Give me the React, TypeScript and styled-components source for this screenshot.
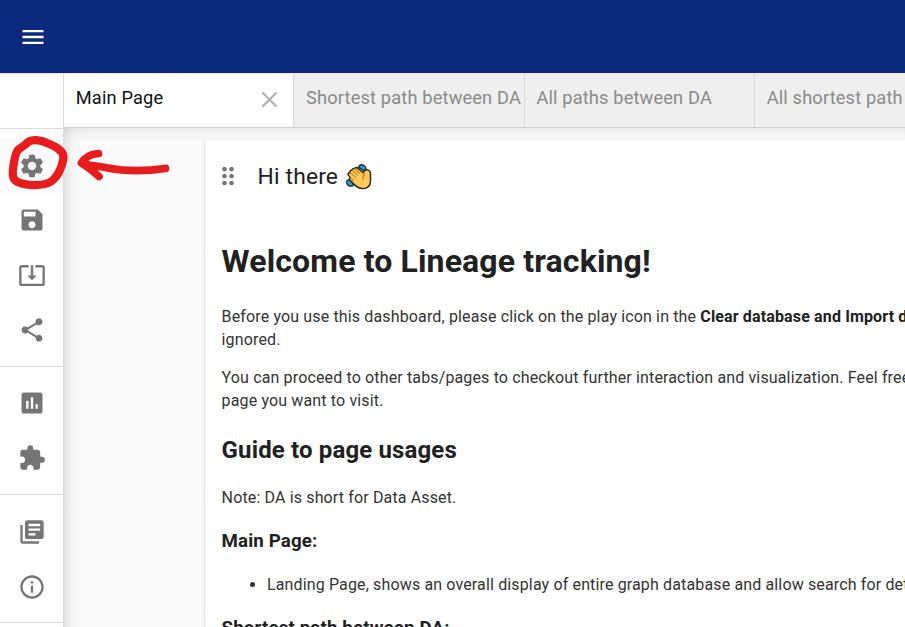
import React from "react";
import styled, { createGlobalStyle } from "styled-components";
import {
  MdClose,
  MdDragIndicator,
  MdExtension,
  MdInfoOutline,
  MdInsertChart,
  MdLibraryBooks,
  MdMenu,
  MdSave,
  MdSettings,
  MdShare,
  MdSystemUpdateAlt,
} from "react-icons/md";

const GlobalStyle = createGlobalStyle`
  * { box-sizing: border-box; }
  html, body { margin: 0; overflow: hidden; }
  body { font-family: Roboto, sans-serif; background: #fafafa; }
`;

const Page = styled.div`
  position: relative;
  display: grid;
  grid-template: 73px 554px / 64px 841px;
  width: 905px;
  height: 627px;
  overflow: hidden;
`;

const Header = styled.header`
  grid-column: 1 / -1;
  display: flex;
  align-items: center;
  padding: 0 0 0 19px;
  background: #0b297d;
  color: #fff;
  svg { width: 28px; height: 28px; }
`;

const Sidebar = styled.nav`
  border-right: 1px solid #dcdcdf;
  border-top: 1px solid #dfe3ee;
  background: #fff;
`;

const SidebarTop = styled.div`
  height: 54px;
`;

const IconGroup = styled.div`
  border-top: 1px solid #dadada;
  padding: 9.4px 0 8.6px;
`;

const IconRow = styled.button<{ $active?: boolean }>`
  display: flex;
  align-items: center;
  width: 100%;
  height: 54.7px;
  padding: 0 0 0 18px;
  border: 0;
  background: ${(p) => (p.$active ? "#fafafa" : "transparent")};
  color: #757575;
  svg { flex: none; width: 28px; height: 28px; }
`;

const Main = styled.main`
  display: flex;
  flex-direction: column;
  min-width: 0;
`;

const TabBar = styled.div`
  flex: none;
  display: flex;
  height: 55px;
  overflow: hidden;
  border-top: 1px solid #e9eef4;
  border-bottom: 1px solid #d0d0d0;
  background: #efefef;
`;

const Tab = styled.div<{ $active?: boolean }>`
  flex: none;
  display: flex;
  justify-content: space-between;
  width: 230.3px;
  padding: 12px 0 0 11.8px;
  overflow: hidden;
  border-right: 1px solid #d9d9d9;
  background: ${(p) => (p.$active ? "#fff" : "#efefef")};
  color: ${(p) => (p.$active ? "#111" : "#8a8a8a")};
  font-size: 18.24px;
  line-height: 24px;
  letter-spacing: 0.15px;
  white-space: nowrap;
  svg { width: 27px; height: 27px; margin: 0 10px 0 0; color: #b4b4b4; }
`;

const Canvas = styled.div`
  flex: 1;
  min-height: 0;
  padding: 12px 0 0 141px;
  background:
    linear-gradient(to bottom, rgba(0, 0, 0, 0.06), rgba(0, 0, 0, 0.015) 10px, transparent 14px),
    linear-gradient(to right, rgba(0, 0, 0, 0.09), rgba(0, 0, 0, 0.025) 8px, transparent 18px),
    #fafafa;
`;

const Card = styled.article`
  width: 700px;
  height: 600px;
  padding: 0 0 0 16.6px;
  border-radius: 4px 0 0 0;
  background: #fff;
  box-shadow: 0 1px 3px rgba(0, 0, 0, 0.24);
`;

const CardHeader = styled.div`
  display: flex;
  align-items: center;
  height: 72px;
  color: #212121;
  font-size: 22.8px;
  letter-spacing: 0.17px;
`;

const DragHandle = styled(MdDragIndicator)`
  width: 28px;
  height: 28px;
  margin: 0 16px 1px -8px;
  color: #757575;
`;

const Wave = styled.svg`
  width: 27px;
  height: 27px;
  margin-left: 6.5px;
`;

const Markdown = styled.div`
  color: #333;
  font-size: 16px;
  line-height: 23px;
  letter-spacing: 0.14px;
  white-space: nowrap;
  h1, h2, h3 { color: #212121; font-weight: 700; }
  h1 { margin: 26px 0 0; font-size: 32px; line-height: 46px; }
  h2 { margin: 21px 0 0; font-size: 24px; line-height: 35px; }
  h3 { margin: 19px 0 0; font-size: 18.7px; line-height: 27px; }
  p { margin: 15px 0 0; }
  h1 + p { margin-top: 21px; }
  h2 + p { margin-top: 18px; }
  ul { margin: 18px 0 0; padding-left: 45.4px; }
  strong { color: #212121; }
`;

const Annotation = styled.svg`
  position: absolute;
  left: 0;
  top: 130px;
  pointer-events: none;
`;

function WavingHand() {
  return (
    <Wave viewBox="0 0 28 28" fill="none" strokeLinecap="round" strokeLinejoin="round">
      <g fill="#3c9cc2" stroke="#19313b" strokeWidth="1.4">
        <path d="M14 4Q16 0.8 19.5 2.4Q22.5 4 21.8 8.4L18 7Z" />
        <path d="M5 17Q0.6 18 2 21.5Q3.5 25 8.5 23.6L8.5 20Z" />
      </g>
      <path
        d="M3.2 12Q3 9.6 5.4 10Q4.7 7.5 7.2 7.2Q7.8 5 10 5.9Q11.3 4 13.2 5.3L19.2 10.3Q20 6.4 23.4 7.1Q26.7 7.8 26.4 12V19Q26.2 26.5 18.5 26.6Q14 26.6 10.8 23.4L5.4 18.2Q3.7 16.4 5.4 15.2Z"
        fill="#ffca55"
        stroke="#24221c"
        strokeWidth="1.5"
      />
      <path
        d="M5.4 10L11 15M7.2 7.2L13 12.5M10 5.9L15.5 11M5.4 15.2L8.5 18M19.2 10.3L20.5 12Q18 13.5 18.5 17"
        stroke="#c27c25"
        strokeWidth="1.1"
      />
    </Wave>
  );
}

const groups = [
  [MdSettings, MdSave, MdSystemUpdateAlt, MdShare],
  [MdInsertChart, MdExtension],
  [MdLibraryBooks, MdInfoOutline],
];

const tabs = ["Main Page", "Shortest path between DA", "All paths between DA", "All shortest path"];

export default function App() {
  return (
    <>
      <GlobalStyle />
      <Page>
        <Header>
          <MdMenu />
        </Header>
        <Sidebar>
          <SidebarTop />
          {groups.map((icons, g) => (
            <IconGroup key={g}>
              {icons.map((Icon, i) => (
                <IconRow key={i} $active={g === 0 && i === 0}>
                  <Icon />
                </IconRow>
              ))}
            </IconGroup>
          ))}
          <IconGroup />
        </Sidebar>
        <Main>
          <TabBar>
            {tabs.map((label, i) => (
              <Tab key={label} $active={i === 0}>
                {label}
                {i === 0 && <MdClose />}
              </Tab>
            ))}
          </TabBar>
          <Canvas>
            <Card>
              <CardHeader>
                <DragHandle />
                Hi there
                <WavingHand />
              </CardHeader>
              <Markdown>
                <h1>Welcome to Lineage tracking!</h1>
                <p>
                  Before you use this dashboard, please click on the play icon in the{" "}
                  <strong>Clear database and Import d</strong>
                  <br />
                  ignored.
                </p>
                <p>
                  You can proceed to other tabs/pages to checkout further interaction and visualization. Feel free
                  <br />
                  page you want to visit.
                </p>
                <h2>Guide to page usages</h2>
                <p>Note: DA is short for Data Asset.</p>
                <h3>Main Page:</h3>
                <ul>
                  <li>Landing Page, shows an overall display of entire graph database and allow search for det</li>
                </ul>
                <h3>Shortest path between DA:</h3>
              </Markdown>
            </Card>
          </Canvas>
        </Main>
        <Annotation width="180" height="65" viewBox="0 130 180 65" fill="none" stroke="#e81c1c" strokeLinecap="round" strokeLinejoin="round">
          <path
            strokeWidth="8.2"
            d="M18 150C21 147 25 146 28 142C32 139 40 139.500 47 143C57 147 64 151 63.500 158C62 167 59 175 52 181C45 186 30 186 20 183C12 180 12.500 176 13 169C14 161 16 152 18 150"
          />
          <path
            strokeWidth="7.7"
            d="M165.500 168.500C148 171 125 171.500 108 168C97 165.500 89 166.500 81.500 163C85 157 91 154 98.500 153.500M81.500 163C88 167 93 171 99 176.500"
          />
        </Annotation>
      </Page>
    </>
  );
}
